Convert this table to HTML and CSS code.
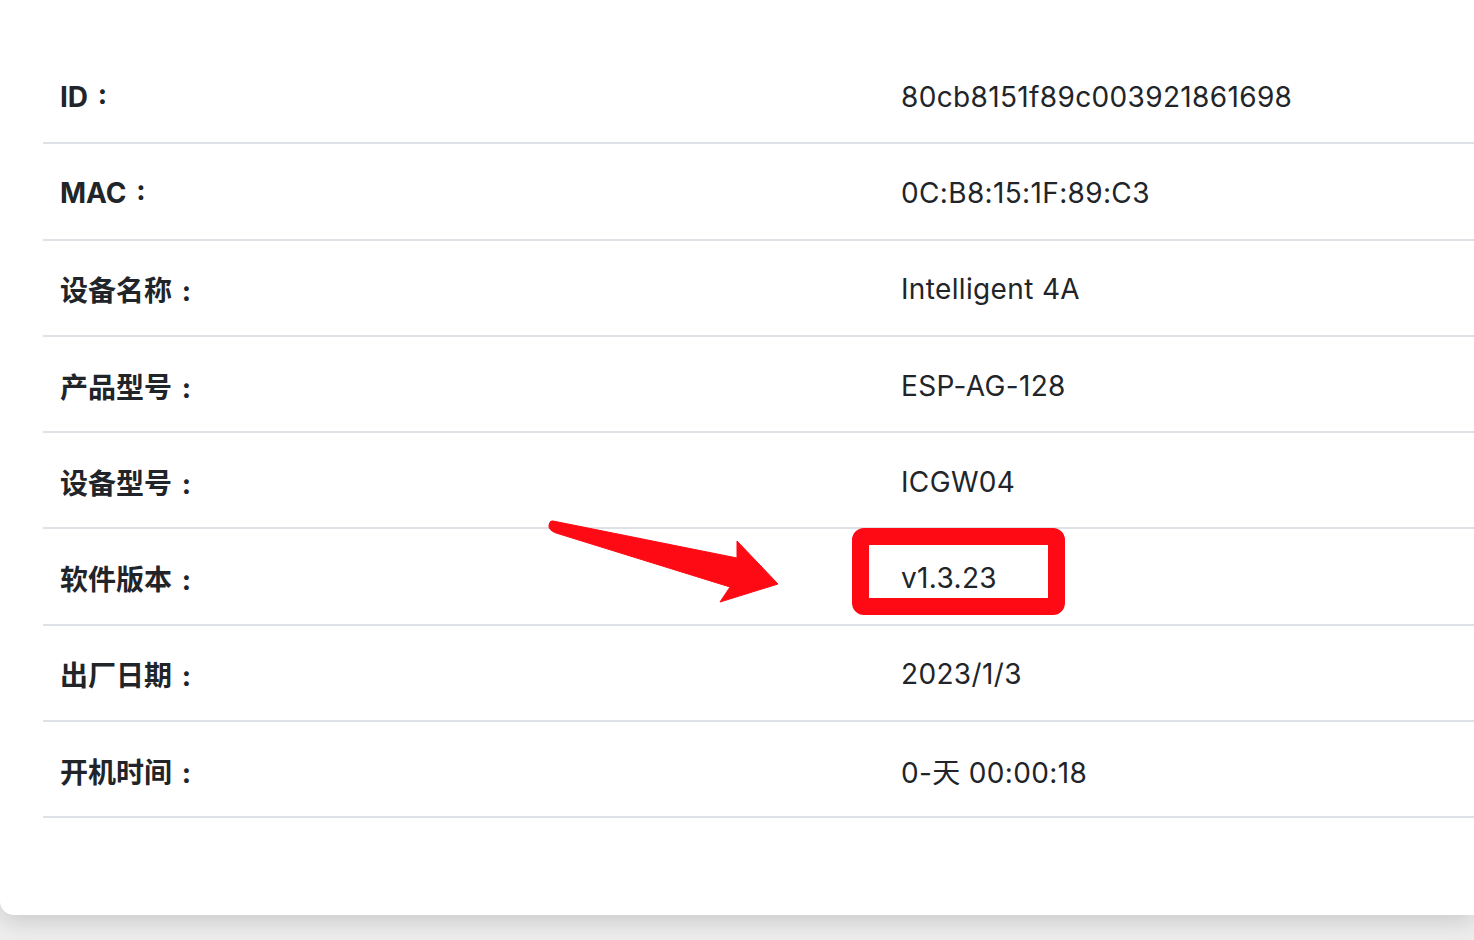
FILE: index.html
```html
<!DOCTYPE html>
<html lang="zh-CN">
<head>
<meta charset="utf-8">
<title>设备信息</title>
<link rel="stylesheet" href="styles.css">
</head>
<body>
<div class="card">
  <div class="info-table">
    <div class="row"><div class="label">ID :</div><div class="value">80cb8151f89c003921861698</div></div>
    <div class="row"><div class="label">MAC :</div><div class="value">0C:B8:15:1F:89:C3</div></div>
    <div class="row"><div class="label">设备名称 :</div><div class="value">Intelligent 4A</div></div>
    <div class="row"><div class="label">产品型号 :</div><div class="value">ESP-AG-128</div></div>
    <div class="row"><div class="label">设备型号 :</div><div class="value">ICGW04</div></div>
    <div class="row"><div class="label">软件版本 :</div><div class="value"><span class="highlight">v1.3.23</span></div></div>
    <div class="row"><div class="label">出厂日期 :</div><div class="value">2023/1/3</div></div>
    <div class="row"><div class="label">开机时间 :</div><div class="value">0-天 00:00:18</div></div>
  </div>
  <svg class="arrow" width="240" height="100" viewBox="540 510 240 100" aria-hidden="true">
    <path d="M553 521 L737 558 L737 541 L778 584 L720 602 L730 587 L556 533 Q548 530 549 525 Q550 520 553 521 Z" fill="#fe0a14" stroke="#fe0a14" stroke-width="1" stroke-linejoin="round"/>
  </svg>
</div>
</body>
</html>
```
FILE: styles.css
```css
html, body {
  margin: 0;
  padding: 0;
}
body {
  background: #eeeeee;
  width: 1474px;
  height: 940px;
  overflow: hidden;
  font-family: Inter, "Noto Sans CJK SC", sans-serif;
  color: #212529;
}
.card {
  position: relative;
  background: #ffffff;
  height: 915px;
  box-sizing: border-box;
  padding: 48px 0 0 43px;
  border-radius: 0 0 0 14px;
  box-shadow: 0 6px 24px rgba(0, 0, 0, 0.16);
  overflow: hidden;
}
.info-table {
  width: 1682px;
}
.row {
  display: flex;
  align-items: center;
  height: 96.3px;
  box-sizing: border-box;
  padding-top: 3px;
  border-bottom: 2px solid #dee2e6;
  font-size: 28px;
}
.label {
  width: 841px;
  box-sizing: border-box;
  padding-left: 17px;
  font-weight: 700;
  word-spacing: 3px;
}
.value {
  flex: 1;
  padding-left: 17px;
  font-weight: 400;
  letter-spacing: 0.35px;
}
.highlight {
  position: relative;
}
.highlight::before {
  content: "";
  position: absolute;
  left: -49px;
  top: -33px;
  width: 179px;
  height: 53px;
  border: 17.5px solid #fe0a14;
  border-radius: 12px;
  pointer-events: none;
}
.arrow {
  position: absolute;
  left: 540px;
  top: 510px;
}
```
